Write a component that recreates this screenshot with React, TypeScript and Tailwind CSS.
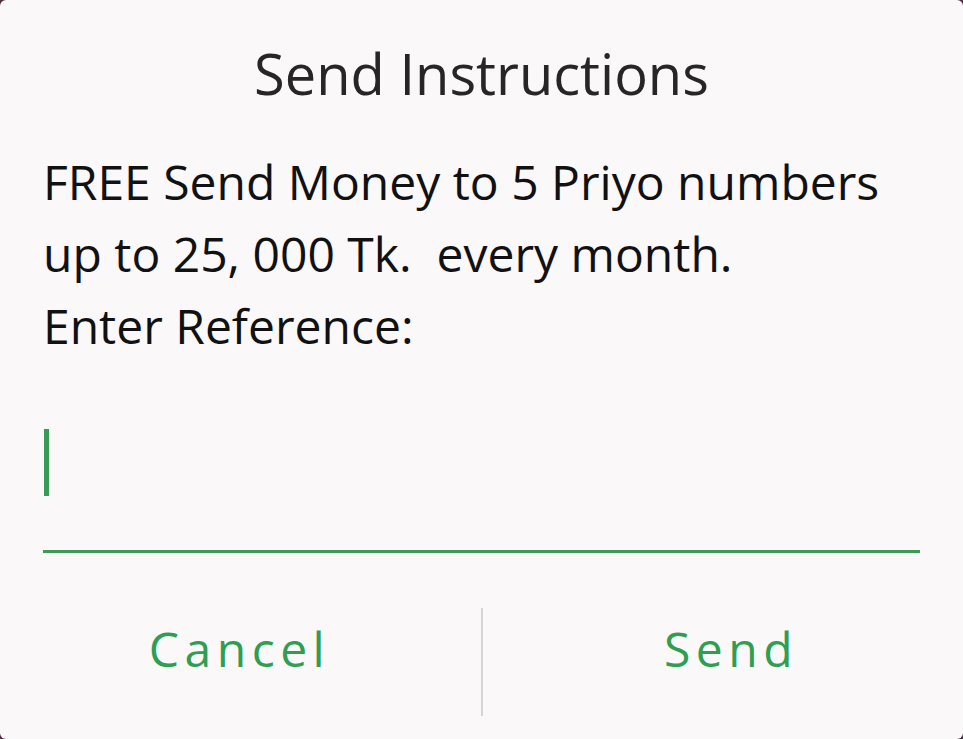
export default function App() {
  return (
    <div className="w-[963px] h-[739px] bg-[#4a3040] overflow-hidden" style={{ fontFamily: '"Open Sans", sans-serif' }}>
      <div className="w-full h-full bg-[#faf8f9] rounded-[6px] flex flex-col">
        <div className="h-[150px] flex items-center justify-center pb-[4px]">
          <h1 className="text-[56px] leading-none text-[#262626]">Send Instructions</h1>
        </div>
        <div className="px-[43px] text-[48px] leading-[72px] text-[#111111] -mt-[4px]">
          <p>FREE Send Money to 5 Priyo numbers</p>
          <p>up to 25, 000 Tk.&nbsp; every month.</p>
          <p>Enter Reference:</p>
        </div>
        <div className="px-[43px] mt-[66px]">
          <div className="h-[125px] border-b-[3px] border-[#3a9a58] flex items-start">
            <div className="w-[5px] h-[67px] bg-[#3a9a58] ml-[1px] mt-[1px]" />
          </div>
        </div>
        <div className="flex mt-[55px] h-[108px]">
          <button className="w-[481px] flex items-center justify-center text-[48px] tracking-[5.5px] text-[#2e9e52] pb-[26px]">
            <span className="mr-[2px]">Cancel</span>
          </button>
          <div className="w-[2px] bg-[#d6d4d5]" />
          <button className="flex-1 flex items-center justify-center text-[48px] tracking-[5.5px] text-[#2e9e52] pb-[26px]">
            <span className="ml-[16px]">Send</span>
          </button>
        </div>
      </div>
    </div>
  );
}
